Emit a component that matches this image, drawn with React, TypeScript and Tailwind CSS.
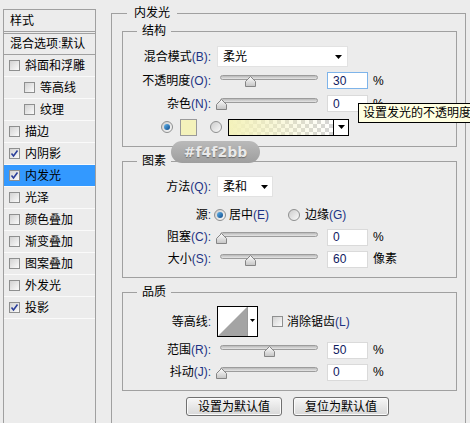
import React from "react";

const layerItems = [
  { label: "斜面和浮雕", checked: false, indent: false },
  { label: "等高线", checked: false, indent: true },
  { label: "纹理", checked: false, indent: true },
  { label: "描边", checked: false, indent: false },
  { label: "内阴影", checked: true, indent: false },
  { label: "内发光", checked: true, indent: false, active: true },
  { label: "光泽", checked: false, indent: false },
  { label: "颜色叠加", checked: false, indent: false },
  { label: "渐变叠加", checked: false, indent: false },
  { label: "图案叠加", checked: false, indent: false },
  { label: "外发光", checked: false, indent: false },
  { label: "投影", checked: true, indent: false },
];

function Check({ checked }: { checked?: boolean }) {
  return (
    <span className="flex h-[11px] w-[11px] shrink-0 items-center justify-center border border-[#8e8f8f] bg-gradient-to-br from-[#d2d2d2] to-[#fbfbfb]">
      {checked && (
        <svg width="9" height="9" viewBox="0 0 9 9">
          <path d="M1.5 4.5 L3.5 7 L7.5 1.5" fill="none" stroke="#2b3f9a" strokeWidth="1.6" />
        </svg>
      )}
    </span>
  );
}

function Radio({ on }: { on?: boolean }) {
  return (
    <span className="flex h-[12px] w-[12px] shrink-0 items-center justify-center rounded-full border border-[#8e8f8f] bg-gradient-to-br from-[#cdcdcd] to-[#fafafa]">
      {on && <span className="h-[6px] w-[6px] rounded-full bg-gradient-to-br from-[#62b6ee] to-[#0b4a8a]" />}
    </span>
  );
}

function Arrow() {
  return (
    <svg width="7" height="4" viewBox="0 0 7 4">
      <path d="M0 0h7L3.5 4z" fill="#000" />
    </svg>
  );
}

function Label({ zh, k }: { zh: string; k?: string }) {
  return (
    <span className="w-[88px] shrink-0 text-right">
      {zh}
      {k && <span className="text-[#1d3384]">({k})</span>}
      <span className="text-[#1d3384]">:</span>
    </span>
  );
}

// thumb position in percent of the track
function Slider({ pos }: { pos: number }) {
  return (
    <div className="relative ml-[6px] mt-[3px] h-[14px] w-[104px] shrink-0">
      <div className="mx-[3px] h-[5px] rounded-full border border-[#9c9c9c] bg-gradient-to-b from-[#b9b9b9] to-[#e6e6e6]" />
      <svg
        className="absolute top-[1px]"
        style={{ left: pos * 0.97 - 1.5 }}
        width="11"
        height="11"
        viewBox="0 0 11 11"
      >
        <defs>
          <linearGradient id="thumb" x1="0" y1="0" x2="0" y2="1">
            <stop offset="0" stopColor="#ffffff" />
            <stop offset="1" stopColor="#c4c4c4" />
          </linearGradient>
        </defs>
        <path d="M0.5 10.5 V5.5 L5.5 0.5 L10.5 5.5 V10.5 Z" fill="url(#thumb)" stroke="#858585" />
      </svg>
    </div>
  );
}

function Field({ value, focus }: { value: string; focus?: boolean }) {
  return (
    <div
      className={`ml-[6px] flex h-[17px] w-[41px] shrink-0 items-center border bg-white pl-[5px] text-[#10205f] ${
        focus ? "border-[#7eb4ea]" : "border-[#dadada]"
      }`}
    >
      {value}
    </div>
  );
}

function SliderRow({
  zh,
  k,
  value,
  pos,
  unit,
  focus,
}: {
  zh: string;
  k: string;
  value: string;
  pos: number;
  unit: string;
  focus?: boolean;
}) {
  return (
    <div className="flex h-[22px] items-center">
      <Label zh={zh} k={k} />
      <Slider pos={pos} />
      <Field value={value} focus={focus} />
      <span className="ml-[5px]">{unit}</span>
    </div>
  );
}

function Group({ title, className, children }: { title: string; className: string; children: React.ReactNode }) {
  return (
    <fieldset className={`ml-[10px] w-[335px] border border-[#a0a0a0] pb-[7px] ${className}`}>
      <legend className="ml-[14px] px-[5px]">{title}</legend>
      {children}
    </fieldset>
  );
}

function Button({ children }: { children: React.ReactNode }) {
  return (
    <div className="flex h-[19px] w-[96px] items-center justify-center rounded-[3px] border border-[#707070] bg-gradient-to-b from-[#f7f7f7] to-[#d8d8d8] shadow-[inset_0_0_0_1px_#fbfbfb]">
      {children}
    </div>
  );
}

export default function App() {
  return (
    <div className="relative flex h-[423px] w-[470px] items-start overflow-hidden bg-[#ececec] pl-[3px] font-['Liberation_Sans','Noto_Sans_CJK_SC',sans-serif] text-[12px] leading-[16px] text-black">
      {/* style list */}
      <div className="mt-[9px] h-[420px] w-[93px] shrink-0 border border-[#a0a0a0]">
        <div className="flex h-[22px] items-center border-b border-[#a0a0a0] pl-[6px]">样式</div>
        <div className="h-[1px]" />
        <div className="flex h-[22px] items-center border-y border-[#a0a0a0] pl-[6px]">
          混合选项<span className="text-[#1d3384]">:</span>默认
        </div>
        {layerItems.map((item) => (
          <div
            key={item.label}
            className={`flex h-[22px] items-center gap-[5px] border-b border-[#fafafa] ${
              item.indent ? "pl-[20px]" : "pl-[5px]"
            } ${item.active ? "bg-[#3399ff]" : ""}`}
          >
            <Check checked={item.checked} />
            <span>{item.label}</span>
          </div>
        ))}
      </div>

      {/* inner glow panel */}
      <fieldset className="ml-[15px] mt-[5px] h-[440px] w-[355px] shrink-0 border border-[#a0a0a0]">
        <legend className="ml-[15px] px-[7px]">内发光</legend>

        <Group title="结构" className="mt-[2px]">
          <div className="mt-[7px] flex h-[21px] items-center">
            <Label zh="混合模式" k="B" />
            <div className="ml-[6px] flex h-[21px] w-[131px] items-center justify-between border border-[#e2e2e2] bg-white pl-[5px] pr-[5px]">
              <span>柔光</span>
              <Arrow />
            </div>
          </div>
          <div className="mt-[2px] flex h-[23px] items-center">
            <Label zh="不透明度" k="O" />
            <Slider pos={30} />
            <Field value="30" focus />
            <span className="ml-[5px]">%</span>
          </div>
          <div className="flex h-[23px] items-center">
            <Label zh="杂色" k="N" />
            <Slider pos={0} />
            <Field value="0" />
            <span className="ml-[5px]">%</span>
          </div>
          <div className="flex h-[24px] items-center pl-[38px]">
            <Radio on />
            <span className="ml-[7px] h-[17px] w-[17px] border border-[#9a9a9a] bg-[#f4f2bb]" />
            <span className="ml-[13px]">
              <Radio />
            </span>
            <div className="ml-[6px] flex h-[17px] w-[121px] border border-black">
              <svg width="104" height="15" viewBox="0 0 104 15">
                <defs>
                  <pattern id="checker" width="8" height="8" patternUnits="userSpaceOnUse">
                    <rect width="8" height="8" fill="#ffffff" />
                    <rect width="4" height="4" fill="#d4d4d4" />
                    <rect x="4" y="4" width="4" height="4" fill="#d4d4d4" />
                  </pattern>
                  <linearGradient id="glow" x1="0" y1="0" x2="1" y2="0">
                    <stop offset="0" stopColor="#f4f2bb" stopOpacity="1" />
                    <stop offset="1" stopColor="#f4f2bb" stopOpacity="0" />
                  </linearGradient>
                </defs>
                <rect width="104" height="15" fill="url(#checker)" />
                <rect width="104" height="15" fill="url(#glow)" />
              </svg>
              <div className="flex w-[15px] items-center justify-center border-l border-black bg-white">
                <Arrow />
              </div>
            </div>
          </div>
        </Group>

        <Group title="图素" className="mt-[6px]">
          <div className="mt-[7px] flex h-[21px] items-center">
            <Label zh="方法" k="Q" />
            <div className="ml-[6px] flex h-[21px] w-[56px] items-center justify-between border border-[#e2e2e2] bg-white pl-[5px] pr-[4px]">
              <span>柔和</span>
              <Arrow />
            </div>
          </div>
          <div className="mt-[7px] flex h-[22px] items-center">
            <Label zh="源" />
            <span className="ml-[3px]">
              <Radio on />
            </span>
            <span className="ml-[3px]">
              居中<span className="text-[#1d3384]">(E)</span>
            </span>
            <span className="ml-[19px]">
              <Radio />
            </span>
            <span className="ml-[5px]">
              边缘<span className="text-[#1d3384]">(G)</span>
            </span>
          </div>
          <SliderRow zh="阻塞" k="C" value="0" pos={0} unit="%" />
          <SliderRow zh="大小" k="S" value="60" pos={30} unit="像素" />
        </Group>

        <Group title="品质" className="mt-[6px]">
          <div className="mt-[6px] flex h-[31px] items-center">
            <Label zh="等高线" />
            <div className="ml-[6px] flex h-[31px] w-[41px] border border-black bg-white">
              <svg width="29" height="29" viewBox="0 0 29 29">
                <polygon points="0,29 29,0 29,29" fill="#a4a4a4" />
              </svg>
              <div className="flex w-[10px] items-center justify-center border-l border-[#9a9a9a] pb-[3px]">
                <svg width="5" height="3" viewBox="0 0 5 3">
                  <path d="M0 0h5L2.5 3z" fill="#000" />
                </svg>
              </div>
            </div>
            <span className="ml-[14px]">
              <Check />
            </span>
            <span className="ml-[4px]">
              消除锯齿<span className="text-[#1d3384]">(L)</span>
            </span>
          </div>
          <div className="mt-[2px]">
            <SliderRow zh="范围" k="R" value="50" pos={50} unit="%" />
          </div>
          <SliderRow zh="抖动" k="J" value="0" pos={0} unit="%" />
        </Group>

        <div className="mt-[6px] flex gap-[11px] pl-[74px]">
          <Button>设置为默认值</Button>
          <Button>复位为默认值</Button>
        </div>
      </fieldset>

      {/* tooltip */}
      <div className="absolute left-[358px] top-[103px] h-[20px] whitespace-nowrap border border-black bg-[#ffffe1] px-[4px] leading-[18px]">
        设置发光的不透明度
      </div>

      {/* colour badge overlay */}
      <div className="absolute left-[171px] top-[141px] flex h-[22px] w-[89px] items-center justify-center rounded-full bg-gradient-to-b from-[#bababa] to-[#9e9e9e] font-['DejaVu_Sans',sans-serif] text-[14px] font-bold text-[#e9e9e9] [text-shadow:0_1px_1px_rgba(0,0,0,0.35)]">
        #f4f2bb
      </div>
    </div>
  );
}
